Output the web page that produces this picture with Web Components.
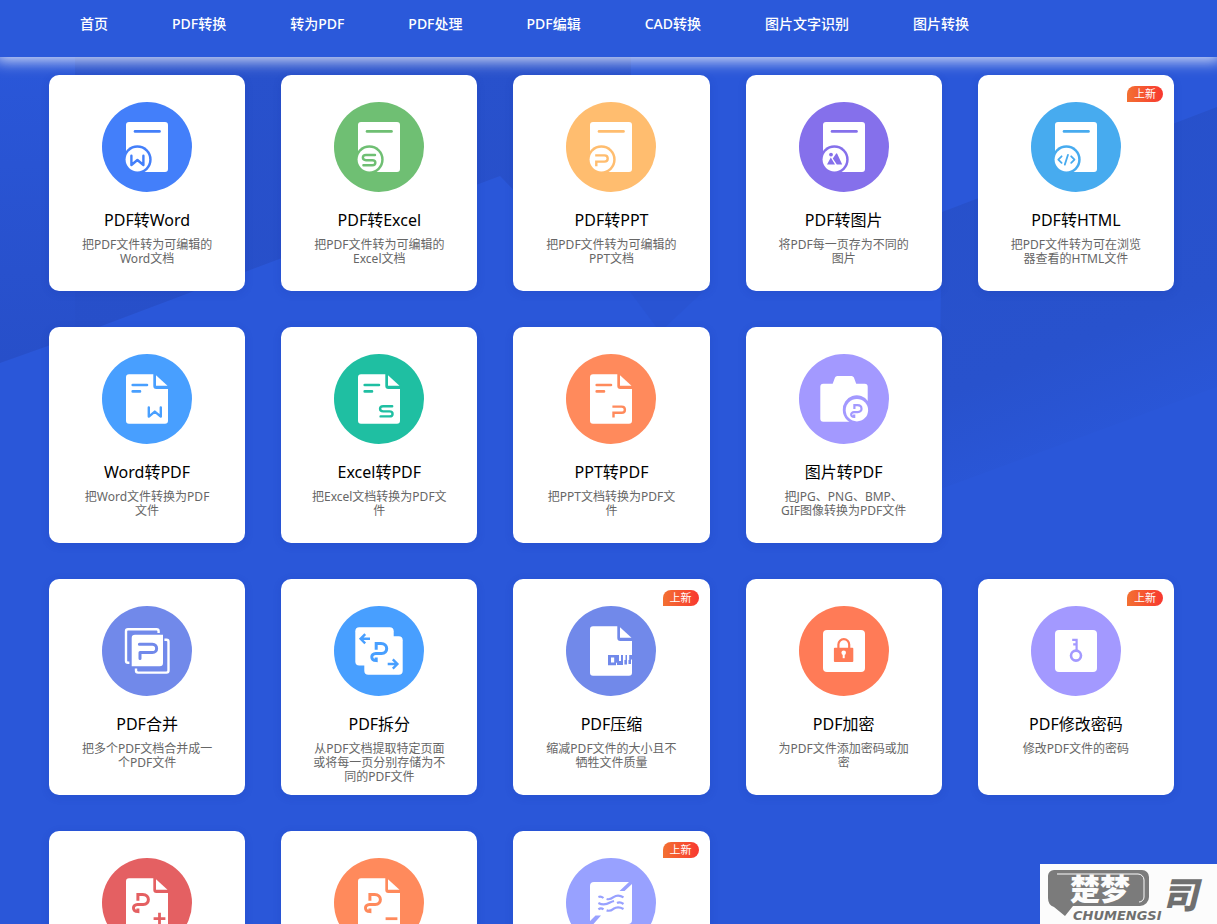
<!DOCTYPE html>
<html lang="zh-CN">
<head>
<meta charset="utf-8">
<meta name="viewport" content="width=device-width, initial-scale=1">
<title>PDF转换</title>
<style>
  html, body { margin: 0; height: 100%; overflow: hidden; }
  body { font-family: "Noto Sans", "Noto Sans CJK SC", sans-serif; background: #2a57d9; }
</style>
</head>
<body>
<pdf-app>
  <site-nav slot="nav">
    <nav-link>首页</nav-link>
    <nav-link>PDF转换</nav-link>
    <nav-link>转为PDF</nav-link>
    <nav-link>PDF处理</nav-link>
    <nav-link>PDF编辑</nav-link>
    <nav-link>CAD转换</nav-link>
    <nav-link>图片文字识别</nav-link>
    <nav-link>图片转换</nav-link>
  </site-nav>

  <tool-row>
    <tool-card icon="toWord" color="#437ffa"><span slot="title">PDF转Word</span>把PDF文件转为可编辑的Word文档</tool-card>
    <tool-card icon="toExcel" color="#6fbf73"><span slot="title">PDF转Excel</span>把PDF文件转为可编辑的Excel文档</tool-card>
    <tool-card icon="toPpt" color="#ffbd6f"><span slot="title">PDF转PPT</span>把PDF文件转为可编辑的PPT文档</tool-card>
    <tool-card icon="toImage" color="#8570eb"><span slot="title">PDF转图片</span>将PDF每一页存为不同的图片</tool-card>
    <tool-card icon="toHtml" color="#47abef"><new-badge slot="badge">上新</new-badge><span slot="title">PDF转HTML</span>把PDF文件转为可在浏览器查看的HTML文件</tool-card>
  </tool-row>
  <tool-row>
    <tool-card icon="fromWord" color="#489fff"><span slot="title">Word转PDF</span>把Word文件转换为PDF文件</tool-card>
    <tool-card icon="fromExcel" color="#1fbfa2"><span slot="title">Excel转PDF</span>把Excel文档转换为PDF文件</tool-card>
    <tool-card icon="fromPpt" color="#ff8a5c"><span slot="title">PPT转PDF</span>把PPT文档转换为PDF文件</tool-card>
    <tool-card icon="fromImage" color="#a399ff"><span slot="title">图片转PDF</span>把JPG、PNG、BMP、GIF图像转换为PDF文件</tool-card>
  </tool-row>
  <tool-row>
    <tool-card icon="merge" color="#7189ea"><span slot="title">PDF合并</span>把多个PDF文档合并成一个PDF文件</tool-card>
    <tool-card icon="split" color="#489fff"><span slot="title">PDF拆分</span>从PDF文档提取特定页面或将每一页分别存储为不同的PDF文件</tool-card>
    <tool-card icon="compress" color="#7189ea"><new-badge slot="badge">上新</new-badge><span slot="title">PDF压缩</span>缩减PDF文件的大小且不牺牲文件质量</tool-card>
    <tool-card icon="lock" color="#ff7b57"><span slot="title">PDF加密</span>为PDF文件添加密码或加密</tool-card>
    <tool-card icon="key" color="#a399ff"><new-badge slot="badge">上新</new-badge><span slot="title">PDF修改密码</span>修改PDF文件的密码</tool-card>
  </tool-row>
  <tool-row>
    <tool-card icon="add" color="#e46062"></tool-card>
    <tool-card icon="remove" color="#ff8a5c"></tool-card>
    <tool-card icon="watermark" color="#98a1ff"><new-badge slot="badge">上新</new-badge></tool-card>
  </tool-row>

  <site-mark slot="mark"></site-mark>
</pdf-app>

<script>
const attach = (el, html) => { el.attachShadow({ mode: 'open' }).innerHTML = html; };

/* Page frame: header, scrolling tool area, faceted backdrop */
customElements.define('pdf-app', class extends HTMLElement {
  constructor() {
    super();
    attach(this, `
      <style>
        :host { display: flex; flex-direction: column; height: 100vh; position: relative; overflow: hidden; }
        header { position: relative; z-index: 1; flex: none; }
        main { position: relative; flex: 1; min-height: 0; overflow: auto; scrollbar-width: none;
               display: flex; flex-direction: column; gap: 36px; padding: 18px 43px 36px 49px; }
        .facets { position: absolute; left: 0; top: 57px; width: 100%; height: 500px; }
        .mark { position: fixed; right: 0; bottom: 0; z-index: 2; }
      </style>
      <svg class="facets" viewBox="0 0 1217 500" preserveAspectRatio="none" aria-hidden="true">
        <defs>
          <linearGradient id="fl" x1="0" y1="0" x2="0" y2="1"><stop offset="0" stop-color="#2851cc"/><stop offset="1" stop-color="#274fc9"/></linearGradient>
          <linearGradient id="side" x1="0" y1="0" x2="0" y2="1"><stop offset="0" stop-color="#2a57d9"/><stop offset=".7" stop-color="#2851cd"/><stop offset="1" stop-color="#274fc9"/></linearGradient>
          <linearGradient id="fr" x1="0" y1="0" x2="0.3" y2="1"><stop offset="0" stop-color="#2750ca"/><stop offset=".7" stop-color="#2852cd"/><stop offset="1" stop-color="#2a57d9"/></linearGradient>
        </defs>
        <path d="M0 0H76V279L0 306Z" fill="url(#side)"/>
        <path d="M75 0H631V150L530 150L500 119L75 279Z" fill="url(#fl)"/>
        <path d="M942 155L1217 50V330L938 433Z" fill="url(#fr)"/>
        <path d="M625 228L660 275L710 228Z" fill="#2954d3"/>
      </svg>
      <header><slot name="nav"></slot></header>
      <main><slot></slot></main>
      <div class="mark"><slot name="mark"></slot></div>`);
  }
});

customElements.define('site-nav', class extends HTMLElement {
  constructor() {
    super();
    attach(this, `
      <style>
        :host { display: block; background: #2b59da; box-shadow: 0 0 14px 4px rgba(255,255,255,.8); }
        nav { display: flex; gap: 64px; height: 57px; padding: 0 80px; box-sizing: border-box; }
      </style>
      <nav><slot></slot></nav>`);
  }
});

customElements.define('nav-link', class extends HTMLElement {
  constructor() {
    super();
    attach(this, `
      <style>
        :host { display: block; flex: none; }
        a { display: block; color: #fff; font-size: 14px; font-weight: 500; line-height: 48px; text-decoration: none; white-space: nowrap; }
      </style>
      <a href="#"><slot></slot></a>`);
  }
});

customElements.define('tool-row', class extends HTMLElement {
  constructor() {
    super();
    attach(this, `
      <style>:host { display: grid; grid-template-columns: repeat(5, minmax(0, 1fr)); gap: 36px; flex: none; }</style>
      <slot></slot>`);
  }
});

customElements.define('new-badge', class extends HTMLElement {
  constructor() {
    super();
    attach(this, `
      <style>
        :host { display: block; width: 36px; height: 16px; border-radius: 8px 8px 8px 0; text-align: center;
                background: linear-gradient(90deg, #f37032, #f8382f); color: #fff; font-size: 11px; line-height: 16px; }
      </style>
      <slot></slot>`);
  }
});

/* Icon artwork on a 90 x 90 disc; C stands for the disc colour */
const card = '<path d="M27 20H63a3 3 0 0 1 3 3V67a3 3 0 0 1-3 3H36V57H24V23a3 3 0 0 1 3-3Z" fill="#fff"/><path d="M33 29.4H57.5" class="s" stroke-width="2.6"/><circle cx="35.4" cy="57.6" r="14.3" fill="C"/><circle cx="35.4" cy="57.6" r="11.8" fill="#fff"/>';
const page = '<path d="M27 20.3H51.3V32a3 3 0 0 0 3 3H66V66.7a3 3 0 0 1-3 3H27a3 3 0 0 1-3-3V23.3a3 3 0 0 1 3-3Z" fill="#fff"/><path d="M54 21.2V31.7H65.5Z" fill="#fff"/>';
const lines = '<path d="M30.7 31H45M30.7 37.4H38" class="s" stroke-width="2.6"/>';
const swirl = '<path d="M42.2 43.8V37.5H47C54.5 37.5 54.5 47.6 47.5 47.6H41.8C36.4 47.6 36.4 54.5 42.2 54.6V51.6" class="m" stroke-width="3"/>';
const W = '<path d="M29.4 53.8V63L35.4 58L41.4 63V53.8" class="s" stroke-width="2.4"/>';
const S = '<path d="M41 53H32C27.8 53 27.8 58.2 32 58.2H38.3C42.4 58.2 42.4 63.2 38.3 63.2H29.4" class="s" stroke-width="2.4"/>';
const P = '<path d="M29.2 53.4H38.4C42.8 53.4 42.8 59.6 38.4 59.6H30.3V64.2" class="m" stroke-width="2.4"/>';
const move = (x, y, art) => `<g transform="translate(${x} ${y})">${art}</g>`;
const ICONS = {
  toWord: card + W,
  toExcel: card + S,
  toPpt: card + P,
  toImage: card + '<circle cx="32" cy="52.6" r="1.9" fill="C"/><path d="M28 62.5L31.8 55.6L36 62.5ZM33.8 56.4L37 51.7Q37.6 51 38.2 51.8L43.2 62.5H37.8Z" fill="C"/>',
  toHtml: card + '<path d="M30.6 54.3L27.3 57.6L30.6 60.9M40.2 54.3L43.5 57.6L40.2 60.9M37 52.8L33.8 62.6" class="s" stroke-width="1.8"/>',
  fromWord: page + lines + move(17.4, -.4, W),
  fromExcel: page + lines + move(17.2, -.8, S),
  fromPpt: page + lines + move(17.2, -.8, P),
  fromImage: '<path d="M24.3 29.7H33.7L36 23.6Q36.6 22 38.3 22H52.6Q54.2 22 54.9 23.6L57.2 29.7H65.7a3 3 0 0 1 3 3V64.7a3 3 0 0 1-3 3H24.3a3 3 0 0 1-3-3V32.7a3 3 0 0 1 3-3Z" fill="#fff"/><path d="M43.8 56a14 14 0 0 1 25.5-8.6V70H58A14 14 0 0 1 43.8 56Z" fill="C"/><circle cx="57.9" cy="56.2" r="11.2" fill="#fff"/><path d="M55.4 55V51.2H58.4C63.8 51.2 63.8 58.2 58.8 58.2H55C51.2 58.2 51.2 63 55.2 63V60.6" class="m" stroke-width="2.2"/>',
  merge: '<path d="M56.6 27V25.2a2 2 0 0 0-2-2H26a2 2 0 0 0-2 2V54.7a2 2 0 0 0 2 2H27.4M62.4 33.8H64.5a2 2 0 0 1 2 2V64.6a2 2 0 0 1-2 2H36a2 2 0 0 1-2-2V62.6" fill="none" stroke="#fff" stroke-width="2.4"/><path d="M33 28.7H61V57a3.3 3.3 0 0 1-3.3 3.3H29.7V32a3.3 3.3 0 0 1 3.3-3.3Z" fill="#fff"/><path d="M37.4 38.2H50.4C56 38.2 56 46.6 50.4 46.6H38V52.4" class="s" stroke-width="3"/>',
  split: '<rect x="21.3" y="21.3" width="38.4" height="38.2" rx="4" fill="#fff"/><rect x="30.3" y="30.3" width="38.4" height="38.4" rx="4" fill="#fff"/>' + swirl + '<path d="M36 32.8H27M31.2 28.2L26.6 32.8L31.2 37.4M53.7 58H63M58.8 53.4L63.4 58L58.8 62.6" class="m" stroke-width="2.4"/>',
  compress: page + '<path d="M42 49H53V55H55V49H57V54H59.5V49H61V54H63.2V49H66V53.5H65V58H62.5V54H61V58.5H58.4V54H57V59H51V56.8H50V59.2H42ZM45 51.6V56.6H48.2V51.6Z" fill="C" fill-rule="evenodd"/>',
  lock: '<rect x="24" y="24" width="42" height="42" rx="4" fill="#fff"/><path d="M39.4 42V38.6a5.4 5.4 0 0 1 10.8 0V42" class="m" stroke-width="2.2"/><rect x="34.9" y="41.7" width="19.4" height="14.3" rx="1" fill="C"/><circle cx="44.7" cy="46.8" r="2.3" fill="#fff"/><path d="M44.7 47V52.2" stroke="#fff" stroke-width="2"/>',
  key: '<rect x="24" y="24" width="42" height="42" rx="4" fill="#fff"/><circle cx="45" cy="49.6" r="5" class="m" stroke-width="2.6"/><path d="M45.6 44.8V32.7M46 33.8H41.2M46 38.4H42.2" class="m" stroke-width="2.2"/>',
  add: page + move(-6.3, -1, swirl) + '<path d="M57.5 54.8V66.6M51.6 60.7H63.4" class="m" stroke-width="2.8"/>',
  remove: page + move(-6.3, -1, swirl) + '<path d="M51.6 60.7H63.4" class="m" stroke-width="2.8"/>',
  watermark: '<path d="M28 24H63L53.5 33H58.5L66 26V62a4 4 0 0 1-4 4H27.5L35 57.5H29.5L24 63V28a4 4 0 0 1 4-4Z" fill="#fff"/><path d="M32.4 39Q35 38 37.5 40M40.6 41Q44 42 47.5 39.2Q52 36 57.5 39.4M32.4 45Q38 48 44 44.5Q46 43.5 48 43M51 45Q54 43.5 57.5 46M32.4 51.4Q35 49.5 37.5 51.4M40.6 52.4Q44 53.6 47.5 50.8Q52 48 57.5 51" class="m" stroke-width="2.2"/>'
};

customElements.define('tool-card', class extends HTMLElement {
  constructor() {
    super();
    const color = this.getAttribute('color');
    const art = ICONS[this.getAttribute('icon')].replaceAll('"C"', `"${color}"`);
    attach(this, `
      <style>
        :host { display: block; }
        a { position: relative; display: flex; flex-direction: column; align-items: center; box-sizing: border-box;
            min-height: 216px; padding: 27px 30px 8px; border-radius: 10px; background: #fff;
            box-shadow: 0 2px 8px rgba(20,50,150,.15); text-align: center; text-decoration: none; }
        svg { display: block; width: 90px; height: 90px; flex: none; }
        .s, .m { fill: none; stroke: ${color}; }
        .s { stroke-linecap: round; stroke-linejoin: round; }
        h3 { margin: 16px 0 6px; font-size: 16px; font-weight: 400; line-height: 24px; color: #000; white-space: nowrap; }
        p { margin: 0; font-size: 12px; line-height: 14px; color: #666; }
        .badge { position: absolute; top: 11px; right: 11px; }
      </style>
      <a href="#">
        <svg viewBox="0 0 90 90" aria-hidden="true"><circle cx="45" cy="45" r="45" fill="${color}"/>${art}</svg>
        <h3><slot name="title"></slot></h3>
        <p><slot></slot></p>
        <div class="badge"><slot name="badge"></slot></div>
      </a>`);
  }
});

/* Brand plate in the corner */
customElements.define('site-mark', class extends HTMLElement {
  constructor() {
    super();
    attach(this, `
      <style>
        :host { display: block; background: #fcfcfc; }
        svg { display: block; width: 177px; height: 60px; }
        text { font-family: "Noto Sans CJK SC", sans-serif; font-weight: 900; }
        .latin { font-family: "DejaVu Sans", sans-serif; font-weight: 700; font-style: italic; }
      </style>
      <svg viewBox="0 0 177 60">
        <path d="M14 6H102a7 7 0 0 1 7 7V33a9 9 0 0 1-9 9H33L25 52L14 43Q8 41 8 34V12a6 6 0 0 1 6-6Z" fill="#7b7b7b"/>
        <path d="M17 10H98a6 6 0 0 1 6 6V33a5 5 0 0 1-5 5" fill="none" stroke="#fcfcfc" stroke-width="1"/>
        <text x="60" y="36" font-size="30" text-anchor="middle" fill="#fcfcfc">楚梦</text>
        <text x="122" y="44" font-size="36" font-style="italic" fill="#6f6f6f">司</text>
        <text class="latin" x="33" y="56" font-size="13" fill="#6f6f6f">CHUMENGSI</text>
      </svg>`);
  }
});
</script>
</body>
</html>
